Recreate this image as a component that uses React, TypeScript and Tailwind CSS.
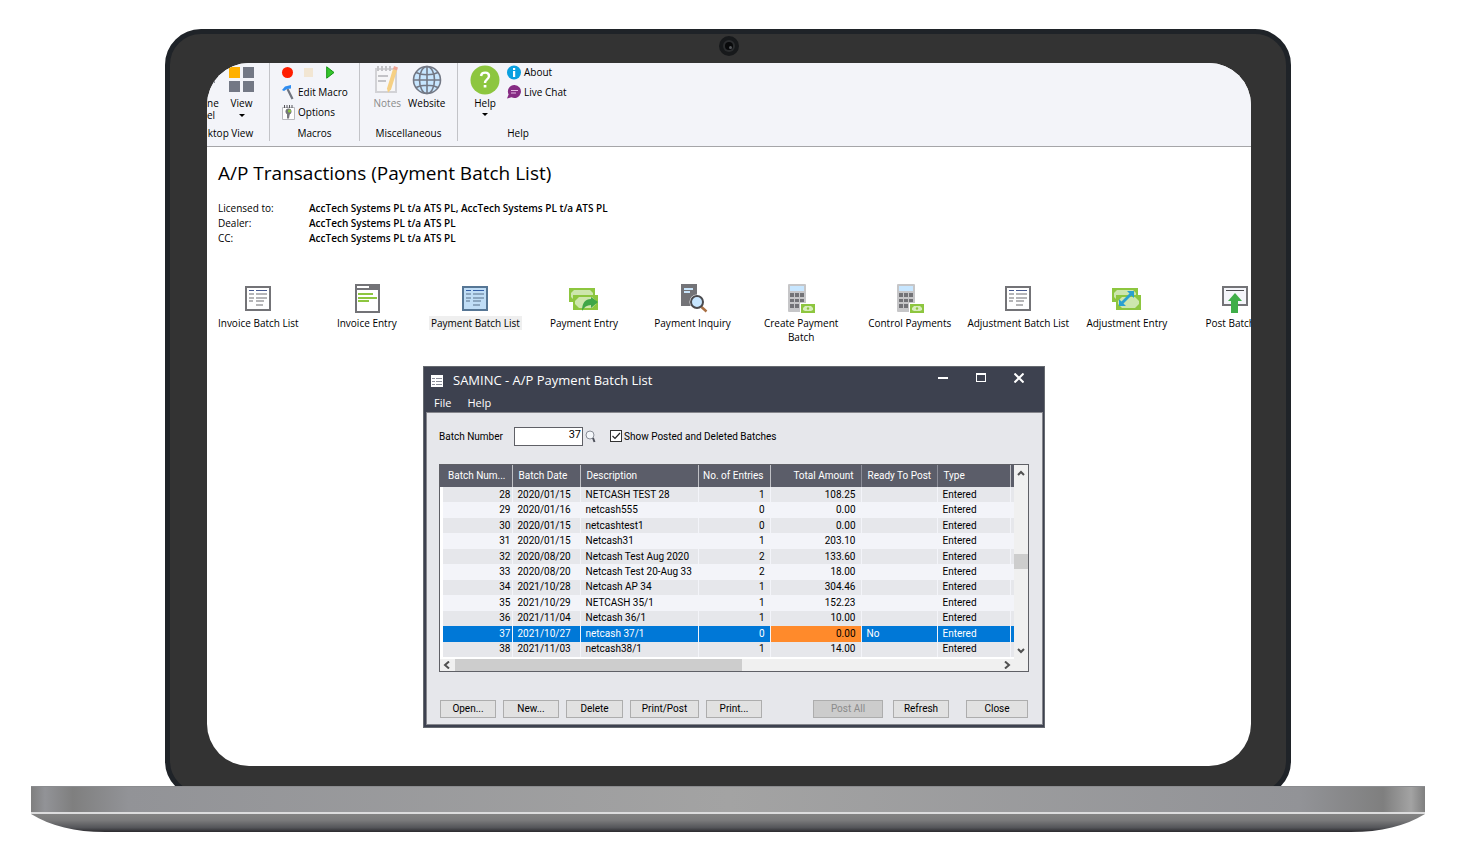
import { useState, type ReactNode } from 'react';
import clsx from 'clsx';

type Batch = {
  id: number;
  date: string;
  description: string;
  entries: number;
  total: string;
};

const batches: Batch[] = [
  { id: 28, date: '2020/01/15', description: 'NETCASH TEST 28', entries: 1, total: '108.25' },
  { id: 29, date: '2020/01/16', description: 'netcash555', entries: 0, total: '0.00' },
  { id: 30, date: '2020/01/15', description: 'netcashtest1', entries: 0, total: '0.00' },
  { id: 31, date: '2020/01/15', description: 'Netcash31', entries: 1, total: '203.10' },
  { id: 32, date: '2020/08/20', description: 'Netcash Test Aug 2020', entries: 2, total: '133.60' },
  { id: 33, date: '2020/08/20', description: 'Netcash Test 20-Aug 33', entries: 2, total: '18.00' },
  { id: 34, date: '2021/10/28', description: 'Netcash AP 34', entries: 1, total: '304.46' },
  { id: 35, date: '2021/10/29', description: 'NETCASH 35/1', entries: 1, total: '152.23' },
  { id: 36, date: '2021/11/04', description: 'Netcash 36/1', entries: 1, total: '10.00' },
  { id: 37, date: '2021/10/27', description: 'netcash 37/1', entries: 0, total: '0.00' },
  { id: 38, date: '2021/11/03', description: 'netcash38/1', entries: 1, total: '14.00' },
];

/* ---------- icons ---------- */

function BatchListIcon({ selected = false }: { selected?: boolean }) {
  const line = selected ? '#8ba6c0' : '#b5b5b7';
  return (
    <svg width="30" height="30" viewBox="0 0 30 30" shapeRendering="crispEdges">
      <rect x="3" y="3" width="24" height="23" fill={selected ? '#c0ddf6' : '#fff'} stroke={selected ? '#567695' : '#737377'} strokeWidth="2" />
      <path d="M6 6.500h5M13 6.500h11" stroke={selected ? '#3560a8' : '#46588f'} />
      <path d="M6 10h5M13 10h11M6 14h5M13 14h11M6 17h4M13 17h8M13 21h7" stroke={line} strokeWidth="2" />
    </svg>
  );
}

function InvoiceEntryIcon() {
  return (
    <svg width="30" height="30" viewBox="0 0 30 30" shapeRendering="crispEdges">
      <rect x="4" y="1" width="23" height="27" fill="#fff" stroke="#737377" strokeWidth="2" />
      <path d="M3 0h25v6H3z" fill="#737377" />
      <path d="M5 2h12v2H5z" fill="#fff" />
      <path d="M6 10h15M6 14h19M6 17h11" stroke="#8dc63f" strokeWidth="2" />
    </svg>
  );
}

function Banknotes({ children }: { children: ReactNode }) {
  return (
    <svg width="30" height="30" viewBox="0 0 30 30">
      <path d="M0 4h26v14H0z" fill="#8dc63f" />
      <path d="M5 6h16l3 3v4l-3 3H5l-3-3V9z" fill="#cde6ad" />
      <path d="M4 11h25v15H4z" fill="#8dc63f" />
      <path d="M10 13h13l4 4v3l-4 4H10l-4-4v-3z" fill="#cde6ad" />
      {children}
    </svg>
  );
}

function PaymentEntryIcon() {
  return (
    <Banknotes>
      <path d="M13 27c0-8 3-12 9-12v-2l7 5-7 6v-3c-4 0-7 2-9 6z" fill="#3fa648" />
    </Banknotes>
  );
}

function AdjustmentEntryIcon() {
  return (
    <Banknotes>
      <path d="M22 7v7l-2.500-2.500-8 8L14 22H7v-7l2.500 2.500 8-8L15 7z" fill="#2aa0d0" />
    </Banknotes>
  );
}

function InquiryIcon() {
  return (
    <svg width="30" height="30" viewBox="0 0 30 30">
      <path d="M3 0h16v22H3z" fill="#737377" />
      <path d="M6 4h9v2H6zM6 7h6v2H6z" fill="#c9e5fb" />
      <circle cx="19" cy="18" r="7.500" fill="#fff" />
      <path d="M23.500 23l5 4.500" stroke="#a86f42" strokeWidth="2.500" />
      <circle cx="19" cy="18" r="6" fill="#c7e6ff" stroke="#4a4a4e" strokeWidth="2" />
    </svg>
  );
}

function CalculatorIcon() {
  return (
    <svg width="30" height="30" viewBox="0 0 30 30">
      <rect x="2" y="0" width="18" height="28" rx="1" fill="#c6c6c8" />
      <path d="M4 2h14v5H4z" fill="#c7e6ff" />
      <path d="M4 9h4v4H4zM9 9h4v4H9zM14 9h4v4h-4zM4 15h4v3H4zM9 15h4v3H9zM14 15h4v3h-4zM4 20h4v4H4zM9 20h4v4H9z" fill="#737377" />
      <path d="M14 19h16v10H14z" fill="#fff" />
      <path d="M15 20h14v9H15z" fill="#8dc63f" />
      <path d="M19 22h6l2 2v2l-2 1h-6l-2-1v-2z" fill="#d7ecbd" />
      <circle cx="22" cy="24.500" r="1.200" fill="#8dc63f" />
    </svg>
  );
}

function PostIcon() {
  return (
    <svg width="30" height="30" viewBox="0 0 30 30">
      <rect x="3" y="3" width="24" height="18" fill="#f4f5fa" stroke="#737377" strokeWidth="2" />
      <path d="M6 6.500h18" stroke="#4b4b4f" />
      <path d="M15 9l7 8h-4v12h-7V17H8z" fill="#3fae49" />
    </svg>
  );
}

function GlobeIcon() {
  return (
    <svg width="30" height="30" viewBox="0 0 30 30" fill="none" stroke="#737885" strokeWidth="1.600">
      <circle cx="15" cy="15" r="13.500" fill="#c7e6ff" />
      <ellipse cx="15" cy="15" rx="7.500" ry="13.500" />
      <path d="M15 1.500v27M1.500 15h27M4 7.500c6 3 16 3 22 0M4 22.500c6-3 16-3 22 0" />
    </svg>
  );
}

function NotesIcon() {
  return (
    <svg width="26" height="28" viewBox="0 0 26 28">
      <path d="M2 4h20v23H2z" fill="#f6f6f8" stroke="#d2d2d6" strokeWidth="2" />
      <path d="M4 1v5M8 1v5M12 1v5M16 1v5" stroke="#c3c3c7" strokeWidth="2" />
      <path d="M4 11h10M4 16h8" stroke="#c3c3c7" strokeWidth="2" />
      <path d="M19 4l4 1.500-6 19-3 3-1-4z" fill="#f6d083" />
      <path d="M20 1l4 1.500-1 3-4-1.500z" fill="#f0a595" />
    </svg>
  );
}

function HelpIcon() {
  return (
    <svg width="30" height="30" viewBox="0 0 30 30">
      <circle cx="15" cy="15" r="14.500" fill="#8dc63f" />
      <path d="M11 11c.5-4.500 8-4.500 8 0 0 3.500-4 3.200-4 7" fill="none" stroke="#fff" strokeWidth="2.400" />
      <path d="M13.700 20h2.700v2.600h-2.700z" fill="#fff" />
    </svg>
  );
}

function AboutIcon() {
  return (
    <svg width="14" height="15" viewBox="0 0 14 15">
      <circle cx="7" cy="7.500" r="7" fill="#0aa0e0" />
      <path d="M6 3h2.200v2H6zM6 6h2.200v6H6z" fill="#fff" />
    </svg>
  );
}

function ChatIcon() {
  return (
    <svg width="14" height="14" viewBox="0 0 14 14">
      <path d="M7.500 0a6.500 6.500 0 1 1-3 12.300L0 13.500l1.600-4A6.500 6.500 0 0 1 7.500 0z" fill="#862c84" />
      <path d="M4 5.500h7M4 8h5" stroke="#e3b9e2" />
    </svg>
  );
}

function HammerIcon() {
  return (
    <svg width="14" height="15" viewBox="0 0 14 15">
      <path d="M5.500 4l5 10" stroke="#70747f" strokeWidth="2.200" />
      <path d="M0 5l3-3.500L9 0v3.500L5 4 2 6z" fill="#2f8df0" />
    </svg>
  );
}

function OptionsIcon() {
  return (
    <svg width="13" height="15" viewBox="0 0 13 15">
      <path d="M.5 2.500h12v12H.5z" fill="#fff" stroke="#b9b9be" />
      <path d="M2.500 0v3M5 0v3M7.500 0v3M10 0v3" stroke="#55555a" />
      <circle cx="6.500" cy="6.500" r="3" fill="#77777c" />
      <circle cx="7.500" cy="6" r="1.600" fill="#8dc63f" />
      <path d="M5 8h3l-1 5.500H5z" fill="#77777c" />
    </svg>
  );
}

function FinderIcon() {
  return (
    <svg width="11" height="13" viewBox="0 0 11 13" fill="none">
      <circle cx="5" cy="5" r="4" fill="#f4f7fa" stroke="#8b8f98" />
      <path d="M8 8l1.500 4" stroke="#4d505a" strokeWidth="2" />
    </svg>
  );
}

function Chevron({ d }: { d: string }) {
  return (
    <svg width="8" height="8" viewBox="0 0 8 8" fill="none" stroke="#505050" strokeWidth="2">
      <path d={d} />
    </svg>
  );
}

function Caret() {
  return (
    <svg width="6" height="3" viewBox="0 0 6 3">
      <path d="M0 0h6L3 3z" fill="#000" />
    </svg>
  );
}

/* ---------- ribbon ---------- */

function RibbonGroup({ title, className, children }: { title: string; className?: string; children: ReactNode }) {
  return (
    <section className={clsx('flex h-[78px] flex-col justify-between', className)}>
      {children}
      <h2 className="text-center leading-4">{title}</h2>
    </section>
  );
}

function Ribbon() {
  return (
    <div className="flex h-[84px] overflow-hidden border-b border-[#a5a5a8] bg-[#f3f4f9] text-[10px] whitespace-nowrap">
      <RibbonGroup title="ktop View" className="w-[63px] border-r border-[#c2c3c8] pr-[15px] text-right">
        <div className="flex items-start justify-between">
          <div className="pt-[17px] text-left">
            <div className="h-[3px] w-2 bg-[#8a8d96]" />
            <div className="pt-[14px] leading-3">ne<br />el</div>
          </div>
          <button type="button" className="flex flex-col items-center gap-[3px] pt-1">
            <svg width="25" height="25" viewBox="0 0 25 25" fill="#737885">
              <path d="M0 0h11v11H0z" fill="#ffb000" />
              <path d="M14 0h11v11H14zM0 14h11v11H0zM14 14h11v11H14z" />
            </svg>
            <span className="leading-4">View</span>
            <Caret />
          </button>
        </div>
      </RibbonGroup>
      <RibbonGroup title="Macros" className="w-[90px] border-r border-[#c2c3c8]">
        <div className="flex flex-col pl-3">
          <div className="flex h-[19px] items-center gap-[11px]">
            <button type="button" aria-label="Record" className="size-[11px] rounded-full bg-[#ff1e00]" />
            <button type="button" aria-label="Stop" className="size-[9px] bg-[#f2e6d3]" />
            <button type="button" aria-label="Play" className="pl-0.5">
              <svg width="9" height="13" viewBox="0 0 9 13">
                <path d="M.7.800L8 6.500.7 12.200z" fill="#35c42c" stroke="#139413" />
              </svg>
            </button>
          </div>
          <button type="button" className="flex h-5 items-center gap-0.5">
            <HammerIcon />
            Edit Macro
          </button>
          <button type="button" className="flex h-5 items-center gap-[3px]">
            <OptionsIcon />
            Options
          </button>
        </div>
      </RibbonGroup>
      <RibbonGroup title="Miscellaneous" className="w-[98px] border-r border-[#c2c3c8]">
        <div className="flex justify-center gap-[7px] pt-0.5 pl-0.5">
          <button type="button" disabled className="flex flex-col items-center text-[#8a8a8a]">
            <NotesIcon />
            <span className="pt-0.5 leading-4">Notes</span>
          </button>
          <button type="button" className="flex flex-col items-center">
            <GlobeIcon />
            <span className="leading-4">Website</span>
          </button>
        </div>
      </RibbonGroup>
      <RibbonGroup title="Help" className="w-[120px]">
        <div className="flex items-start gap-[7px] pt-0.5 pl-3">
          <button type="button" className="flex flex-col items-center">
            <HelpIcon />
            <span className="leading-4">Help</span>
            <span className="pt-0.5"><Caret /></span>
          </button>
          <div className="-mt-px flex flex-col">
            <button type="button" className="flex h-4 items-center gap-[3px]">
              <AboutIcon />
              About
            </button>
            <button type="button" className="mt-1 flex h-4 items-center gap-[3px]">
              <ChatIcon />
              Live Chat
            </button>
          </div>
        </div>
      </RibbonGroup>
    </div>
  );
}

/* ---------- launcher ---------- */

const shortcuts: { label: string; icon: ReactNode; selected?: boolean }[] = [
  { label: 'Invoice Batch List', icon: <BatchListIcon /> },
  { label: 'Invoice Entry', icon: <InvoiceEntryIcon /> },
  { label: 'Payment Batch List', icon: <BatchListIcon selected />, selected: true },
  { label: 'Payment Entry', icon: <PaymentEntryIcon /> },
  { label: 'Payment Inquiry', icon: <InquiryIcon /> },
  { label: 'Create Payment\nBatch', icon: <CalculatorIcon /> },
  { label: 'Control Payments', icon: <CalculatorIcon /> },
  { label: 'Adjustment Batch List', icon: <BatchListIcon /> },
  { label: 'Adjustment Entry', icon: <AdjustmentEntryIcon /> },
  { label: 'Post Batches', icon: <PostIcon /> },
];

function Shortcuts() {
  return (
    <nav className="-ml-[3px] grid w-[104%] grid-cols-10 text-[10px]">
      {shortcuts.map(({ label, icon, selected }) => (
        <button key={label} type="button" className="flex flex-col items-center gap-0.5">
          {icon}
          <span className={clsx('px-0.5 leading-[14px] whitespace-pre', selected && 'bg-[#efefef]')}>{label}</span>
        </button>
      ))}
    </nav>
  );
}

/* ---------- batch list window ---------- */

function PushButton({ className, disabled, children }: { className: string; disabled?: boolean; children: ReactNode }) {
  return (
    <button
      type="button"
      disabled={disabled}
      className={clsx(
        'h-[18px] border border-[#adadad] leading-4',
        disabled ? 'bg-[#cccccc] text-[#8b8b8b]' : 'bg-[#e1e1e1] text-black',
        className,
      )}
    >
      {children}
    </button>
  );
}

function BatchTable({ current, onSelect }: { current: number; onSelect: (id: number) => void }) {
  return (
    <table className="h-[192px] w-full table-fixed border-collapse bg-white whitespace-nowrap">
      <colgroup>
        <col className="w-[3px]" />
        <col className="w-[69px]" />
        <col className="w-[68px]" />
        <col className="w-[118px]" />
        <col className="w-[72px]" />
        <col className="w-[91px]" />
        <col className="w-[76px]" />
        <col className="w-[73px]" />
        <col />
      </colgroup>
      <thead>
        <tr className="h-[22px] bg-[#5b5d69] text-white [&>th]:font-normal [&>th]:leading-4">
          <td />
          <th className="border-r border-[#c0c1c6] pr-[6px] text-right">Batch Num...</th>
          <th className="border-r border-[#c0c1c6] pl-[6px] text-left">Batch Date</th>
          <th className="border-r border-[#c0c1c6] pl-[6px] text-left">Description</th>
          <th className="border-r border-[#c0c1c6] pr-[6px] text-right">No. of Entries</th>
          <th className="border-r border-[#8b8d98] pr-[7px] text-right">Total Amount</th>
          <th className="border-r border-[#8b8d98] pl-[6px] text-left">Ready To Post</th>
          <th className="border-r border-[#c0c1c6] pl-[6px] text-left">Type</th>
          <td />
        </tr>
      </thead>
      <tbody>
        {batches.map((batch) => {
          const active = batch.id === current;
          return (
            <tr
              key={batch.id}
              onClick={() => onSelect(batch.id)}
              className={clsx(
                '[&>td]:p-0 [&>td]:leading-3 [&>td+td+td]:border-l [&>td+td+td]:border-[#f3f4f9]',
                active ? 'bg-[#0078d7] text-white' : 'bg-[#f3f4f9] odd:bg-[#e6e7eb]',
              )}
            >
              <td className="bg-white" />
              <td><div className="pr-px text-right">{batch.id}</div></td>
              <td><div className="pl-[5px]">{batch.date}</div></td>
              <td><div className="pl-[5px]">{batch.description}</div></td>
              <td><div className="pr-[5px] text-right">{batch.entries}</div></td>
              <td className={clsx(active && 'bg-[#ff8a2b] text-black')}>
                <div className="pr-[5px] text-right">{batch.total}</div>
              </td>
              <td><div className="pl-[5px]">{active && 'No'}</div></td>
              <td><div className="pl-[5px]">Entered</div></td>
              <td />
            </tr>
          );
        })}
      </tbody>
    </table>
  );
}

function BatchListWindow() {
  const [current, setCurrent] = useState(37);
  const [showPosted, setShowPosted] = useState(true);

  return (
    <section className="w-[622px] border border-[#666a70] bg-[#3d414f]">
      <header className="text-white">
        <div className="flex h-[27px] items-center pl-[7px]">
          <svg width="12" height="12" viewBox="0 0 12 12">
            <path d="M0 0h12v12H0z" fill="#fff" />
            <path d="M1 3.500h3M5 3.500h6M1 6.500h3M5 6.500h6M1 9.500h3M5 9.500h6" stroke="#8a8d98" />
          </svg>
          <h2 className="pl-[10px] text-[13px]">SAMINC - A/P Payment Batch List</h2>
          <div className="mr-5 mb-1.5 ml-auto flex items-center gap-7">
            <button type="button" aria-label="Minimize" className="h-0.5 w-[10px] bg-white" />
            <button type="button" aria-label="Maximize" className="h-[9px] w-[10px] border border-t-2 border-white" />
            <button type="button" aria-label="Close window">
              <svg width="10" height="10" viewBox="0 0 10 10" stroke="#fff" strokeWidth="2">
                <path d="M.5.500l9 9M9.500.500l-9 9" />
              </svg>
            </button>
          </div>
        </div>
        <div className="flex h-[18px] items-center gap-4 pl-[10px] text-[11px]">
          <button type="button">File</button>
          <button type="button">Help</button>
        </div>
      </header>

      <form
        className="mr-px mb-0.5 ml-0.5 border border-[#85868c] bg-[#e6e7eb] pt-[13px] pr-[13px] pb-[6px] pl-3 font-[Roboto,sans-serif] text-[10px]"
        onSubmit={(e) => e.preventDefault()}
      >
        <div className="flex h-5 items-center">
          <label htmlFor="batch-number" className="w-[75px]">Batch Number</label>
          <input
            id="batch-number"
            value={current}
            onChange={(e) => setCurrent(Number(e.target.value) || 0)}
            className="h-[19px] w-[69px] border border-[#5f6066] bg-white pr-px pb-[3px] text-right text-[11px]"
          />
          <button type="button" aria-label="Find batch" className="pl-0.5"><FinderIcon /></button>
          <label className="ml-[14px] flex items-center gap-0.5">
            <input
              type="checkbox"
              checked={showPosted}
              onChange={(e) => setShowPosted(e.target.checked)}
              className="peer sr-only"
            />
            <svg
              width="12"
              height="12"
              viewBox="0 0 12 12"
              fill="none"
              className="bg-white [&>path]:opacity-0 peer-checked:[&>path]:opacity-100"
            >
              <rect x=".5" y=".5" width="11" height="11" stroke="#333" />
              <path d="M2.500 6l2.500 2.500L10 3" stroke="#222" strokeWidth="1.200" />
            </svg>
            Show Posted and Deleted Batches
          </label>
        </div>

        <div className="mt-[18px] border border-[#5f6066] bg-[#f0f0f0]">
          <div className="flex">
            <div className="min-w-0 flex-1 border-b-2 border-white">
              <BatchTable current={current} onSelect={setCurrent} />
            </div>
            <div className="flex w-[14px] flex-col items-center">
              <button type="button" aria-label="Scroll up" className="flex h-4 items-center"><Chevron d="M1 6l3-3 3 3" /></button>
              <div className="mt-[73px] h-[15px] w-full bg-[#cdcdcd]" />
              <button type="button" aria-label="Scroll down" className="mt-auto flex h-4 items-center"><Chevron d="M1 2l3 3 3-3" /></button>
            </div>
          </div>
          <div className="flex h-3 items-center pr-[14px]">
            <button type="button" aria-label="Scroll left" className="w-[15px] pl-[3px]"><Chevron d="M6 0.500L2 4l4 3.500" /></button>
            <div className="h-3 w-1/2 bg-[#cdcdcd]" />
            <button type="button" aria-label="Scroll right" className="ml-auto pr-[3px]"><Chevron d="M2 0.500L6 4 2 7.500" /></button>
          </div>
        </div>

        <div className="mt-7 mr-px ml-px flex gap-[7px]">
          <PushButton className="w-14">Open...</PushButton>
          <PushButton className="w-14">New...</PushButton>
          <PushButton className="w-[57px]">Delete</PushButton>
          <PushButton className="w-[69px]">Print/Post</PushButton>
          <PushButton className="w-14">Print...</PushButton>
          <PushButton className="ml-auto w-[70px]" disabled>Post All</PushButton>
          <PushButton className="ml-[3px] w-14">Refresh</PushButton>
          <PushButton className="ml-[10px] w-[62px]">Close</PushButton>
        </div>
      </form>
    </section>
  );
}

/* ---------- page ---------- */

const license = [
  ['Licensed to:', 'AccTech Systems PL t/a ATS PL, AccTech Systems PL t/a ATS PL'],
  ['Dealer:', 'AccTech Systems PL t/a ATS PL'],
  ['CC:', 'AccTech Systems PL t/a ATS PL'],
];

function Desktop() {
  return (
    <main className="min-h-[703px] overflow-hidden rounded-[42px] bg-white">
      <Ribbon />
      <h1 className="pt-3 pl-[11px] text-[19px] leading-7">A/P Transactions (Payment Batch List)</h1>
      <dl className="mt-[14px] grid grid-cols-[91px_1fr] pl-[11px] text-[10px] leading-[15px]">
        {license.map(([term, value]) => (
          <div key={term} className="contents">
            <dt>{term}</dt>
            <dd className="font-semibold">{value}</dd>
          </div>
        ))}
      </dl>
      <div className="mt-[38px]">
        <Shortcuts />
      </div>
      <div className="mt-[22px] pl-[216px]">
        <BatchListWindow />
      </div>
    </main>
  );
}

export default function App() {
  return (
    <div className="bg-white pt-[29px] pr-8 pb-[29px] pl-[31px] font-['Open_Sans',sans-serif] text-black">
      <div className="mx-[134px] h-[757px] overflow-hidden">
        <div className="h-[768px] rounded-[36px] border-[5px] border-[#1f2328] bg-[#333333] pr-[35px] pl-[37px]">
          <div className="flex h-[29px] justify-center pt-0.5">
            <svg width="20" height="20" viewBox="0 0 20 20">
              <circle cx="10" cy="10" r="10" fill="#17191b" />
              <circle cx="10" cy="10" r="6" fill="#2b2d2f" />
              <circle cx="10" cy="10" r="4" fill="#08090a" />
              <circle cx="11.500" cy="11.500" r="1.500" fill="#55585c" />
            </svg>
          </div>
          <Desktop />
        </div>
      </div>
      <div className="h-[26px] border-t border-[#8b8c8f] bg-[linear-gradient(90deg,#7f7f7f_0%,#929397_1%,#7f7f7f_3%,#929397_7%,#a3a3a3_50%,#929397_91%,#7f7f7f_97%,#a3a3a3_99%,#7f7f7f_100%)]" />
      <div className="h-0.5 bg-[#dcdcdd]" />
      <svg className="block h-[18px] w-full" viewBox="0 0 1394 18" preserveAspectRatio="none">
        <defs>
          <linearGradient id="tray" x1="0" y1="0" x2="0" y2="1">
            <stop offset="0" stopColor="#838383" />
            <stop offset=".35" stopColor="#7a7a7b" />
            <stop offset=".75" stopColor="#55565a" />
            <stop offset="1" stopColor="#2b2a2e" />
          </linearGradient>
        </defs>
        <path d="M0 0h1394c-20 12-44 18-74 18H74C44 18 20 12 0 0z" fill="url(#tray)" />
      </svg>
    </div>
  );
}
